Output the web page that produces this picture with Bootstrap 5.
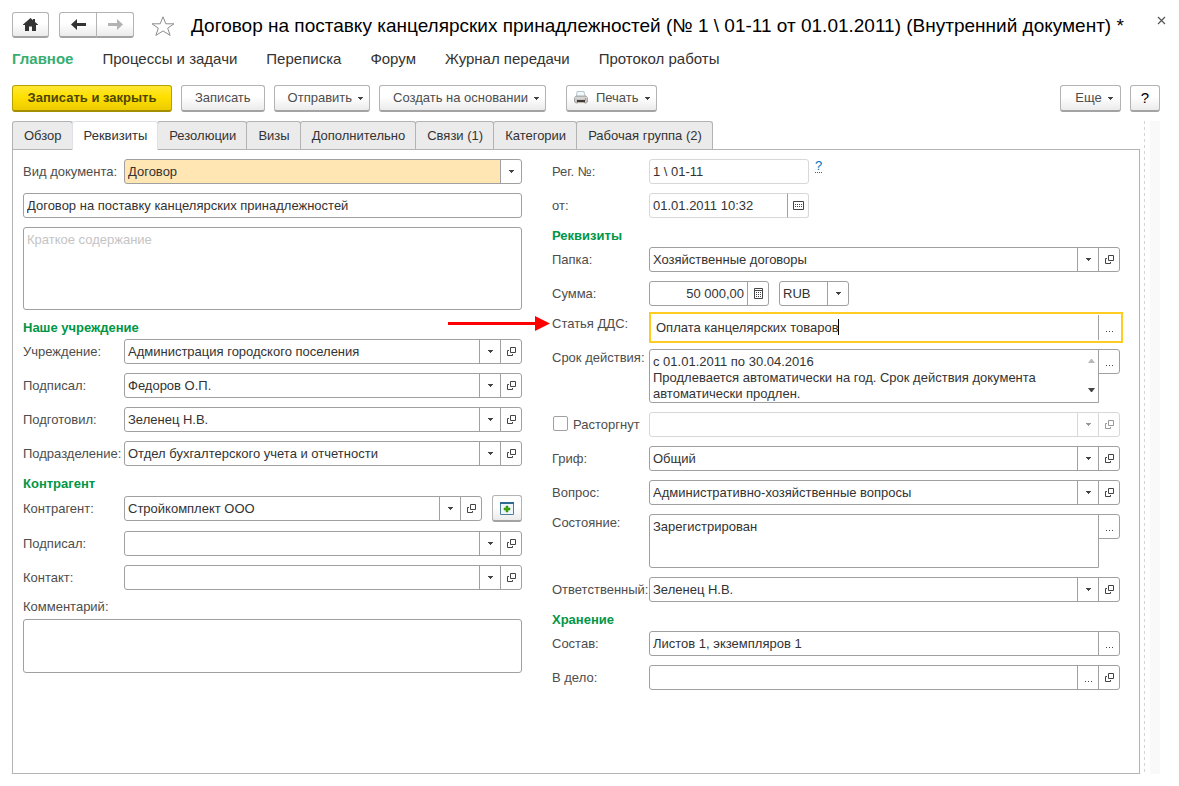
<!DOCTYPE html>
<html lang="ru">
<head>
<meta charset="utf-8">
<meta name="viewport" content="width=device-width, initial-scale=1">
<title>Договор на поставку канцелярских принадлежностей</title>
<link href="https://cdn.jsdelivr.net/npm/bootstrap@5.3.0/dist/css/bootstrap.min.css" rel="stylesheet">
<style>
  :root { --line: #a0a0a0; --line-soft: #d8d8d8; --ink: #333; --ink-soft: #4d4d4d; --green: #009646; }
  body { font-family: "Liberation Sans", Arial, sans-serif; font-size: 13px; line-height: 16px; color: var(--ink); background: #fff; }
  .page { padding: 12px 19px 12px 12px; }
  .top-bar { margin-right: -6px; }
  .history { margin: 0 17px 0 10px; }
  .doc-title { font-size: 19px; line-height: 28px; color: #000; margin: 0; font-weight: 400; }
  .btn { --bs-btn-font-size: 13px; --bs-btn-line-height: 16px; --bs-btn-padding-y: 0; --bs-btn-padding-x: 13px; --bs-btn-border-radius: 3px; --bs-btn-font-family: inherit; }
  .btn-face { --bs-btn-color: #4d4d4d; --bs-btn-border-color: #b3b3b3; --bs-btn-hover-color: #333; --bs-btn-hover-border-color: #999;
    height: 27px; background: linear-gradient(#fff 45%, #ebebeb); border-bottom: 2px solid #a3a3a3; display: inline-flex; align-items: center; justify-content: center; }
  .btn-main { --bs-btn-color: #4d4600; --bs-btn-border-color: #b8a200; --bs-btn-padding-x: 14px; min-width: 160px; background: linear-gradient(#ffe836, #ffe000 45%, #eccb00); border-bottom-color: #a38f00; font-weight: 700; }
  .btn-small { width: 37px; --bs-btn-padding-x: 0; height: 26px; }
  .history .btn-small { width: 38px; }
  .btn-drop { padding-right: 6px; }
  .btn-drop .mark-down { margin-left: 6px; }
  .btn-print { margin-left: 11px; padding-left: 7px; }
  .btn-more { min-width: 61px; }
  .sections { gap: 29px; margin-top: 8px; font-size: 15px; line-height: 22px; --bs-nav-link-padding-x: 0; --bs-nav-link-padding-y: 0; --bs-nav-link-color: #333; }
  .sections .active { color: #38ad70; font-weight: 700; }
  .tools { gap: 9px; margin-top: 15px; }
  .workarea { margin-top: 9px; }
  .nav-tabs { --bs-nav-tabs-border-width: 0; font-size: 13px; }
  .nav-tabs .nav-link { border: 1px solid #b3b3b3; border-bottom: 0; border-radius: 3px 3px 0 0; background: #ebebeb; color: #333; height: 28px; padding: 0 10px 0 11px; margin: 0 -1px 0 0; }
  .nav-tabs .nav-link.active { background: #fff; color: #333; height: 29px; margin-bottom: -1px; position: relative; }
  .sheet { border: 1px solid #b3b3b3; padding: 9px 19px 9px 10px; }
  .cols { display: grid; grid-template-columns: 499fr 568fr; gap: 30px; }
  .line { display: flex; margin-bottom: 9px; align-items: center; }
  .line > label, .line > .cap { flex: none; color: var(--ink-soft); white-space: nowrap; }
  .line.align-items-start > label { line-height: 18px; }
  .left .cap { width: 101px; } .right .cap { width: 97px; }
  .group-head { color: var(--green); font-size: 13px; line-height: 18px; font-weight: 700; margin: 0 0 2px; }
  .form-control, .form-select { font-size: 13px; line-height: 16px; min-height: 0; height: 25px; color: var(--ink); border: 1px solid var(--line); border-radius: 3px; padding: 0 3px; }
  .form-control::placeholder { color: #c4c4c4; opacity: 1; }
  textarea.form-control { padding-top: 4px; resize: none; overflow: hidden; min-height: 0; }
  .tall { height: 54px !important; } .taller { height: 83px !important; }
  .form-select { background: #fff; }
  .pick { position: relative; }
  .pick svg { position: absolute; right: 8px; top: 11px; pointer-events: none; }
  .pick .kind { background: linear-gradient(90deg, #ffe6b3, #ffe6b3) left top / calc(100% - 20px) 100% no-repeat, #fff; }
  .rule { position: absolute; right: 21px; top: 0; bottom: 0; width: 1px; background: var(--line); }
  .input-group { flex: 1 1 0; width: auto; min-width: 0; align-items: flex-start; }
  .input-group .btn { --bs-btn-border-color: var(--line); --bs-btn-padding-x: 0; --bs-btn-color: #444; background: #fff; width: 22px; height: 25px; flex: none; display: flex; align-items: center; justify-content: center; }
  .dim .form-control, .dim .btn { border-color: var(--line-soft); background: #fff; opacity: 1; }
  .dim .btn svg { opacity: .55; }
  .current { border: 2px solid #fc2; margin: -3px -3px -3px 0; padding: 1px; position: relative; height: 31px; }
  .current .form-control { border: 0; padding-left: 4px; }
  .current .btn { border-width: 0 0 0 1px; border-radius: 0; margin: 0 !important; width: 22px; }
  .caret { position: absolute; left: 188px; top: 5px; width: 1px; height: 16px; background: #000; z-index: 6; }
  .pointer { position: absolute; right: 100%; margin-right: 2px; top: 0; }
  .scroll-marks { position: absolute; right: 25px; top: 10px; z-index: 6; }
  .form-check-input { width: 15px; height: 15px; margin: 0 5px 0 1px; border: 1px solid var(--line); border-radius: 2px !important; vertical-align: -2px; float: none; }
  .hint { color: #0072bc; text-decoration: none; border-bottom: 1px dotted #0072bc; line-height: 13px; align-self: flex-start; margin-left: 6px; }
  .splitter { flex: none; width: 1px; margin: 0 5px 0 4px; background: repeating-linear-gradient(#d4d4d4 0 3px, transparent 3px 6px); }
  .gutter { flex: none; width: 10px; background: #f9f9f9; }
  .short { flex: 0 0 160px !important; width: 160px !important; }
  #reg, .soft .form-control { border-color: var(--line-soft); }
  .soft .btn { border-color: var(--line-soft); border-left-color: var(--line); }
  .sum { flex: 0 0 120px !important; margin-right: 10px; }
  .money { width: 70px; }
  .add { width: 30px; --bs-btn-padding-x: 0; margin-left: 10px; }
  .help { width: 30px; --bs-btn-padding-x: 0; font-size: 15px; }
</style>
</head>
<body>
<svg width="0" height="0" class="position-absolute" aria-hidden="true">
  <symbol id="down" viewBox="0 0 5 3"><path d="M0 0h5v1H4v1H3v1H2V2H1V1H0z" fill="#444"/></symbol>
  <symbol id="open" viewBox="0 0 9 9"><path d="M3.500 .5h5v5h-5zM2 3.500H.5v5h5V7" fill="none" stroke="#444"/></symbol>
  <symbol id="dots" viewBox="0 0 7 1"><path d="M0 0h1v1H0zM3 0h1v1H3zM6 0h1v1H6z" fill="#444"/></symbol>
</svg>

<div class="page min-vh-100 d-flex flex-column">
  <header class="top-bar d-flex align-items-start">
    <button class="btn btn-face btn-small" aria-label="Домой"><svg width="15" height="13" viewBox="0 0 15 13"><path d="M7.500 0 0 6.500V7h2v6h4V8.500h3V13h4V7h2v-.5L12 4V1h-2v1.300z" fill="#333"/></svg></button>
    <div class="btn-group history">
      <button class="btn btn-face btn-small" aria-label="Назад"><svg width="15" height="11" viewBox="0 0 15 11"><path d="M6 0v4h9v3H6v4L0 5.500z" fill="#333"/></svg></button>
      <button class="btn btn-face btn-small" aria-label="Вперед"><svg width="15" height="11" viewBox="0 0 15 11"><path d="M9 0v4H0v3h9v4l6-5.500z" fill="#b3b3b3"/></svg></button>
    </div>
    <svg class="me-3 mt-1 flex-shrink-0" width="24" height="20" viewBox="0 0 24 20"><path d="M12 .8l2.800 7h8.200l-6.300 4.400 2.400 7.200L12 14.900l-7.100 4.500 2.400-7.200L1 7.800h8.200z" fill="#fff" stroke="#8c8c8c"/></svg>
    <h1 class="doc-title flex-fill text-nowrap">Договор на поставку канцелярских принадлежностей (№ 1 \ 01-11 от 01.01.2011) (Внутренний документ) *</h1>
    <button class="btn border-0 p-0 mt-1 lh-1 d-flex" aria-label="Закрыть"><svg width="9" height="9" viewBox="0 0 9 9"><path d="M1 1l7 7m0-7l-7 7" stroke="#555" stroke-width="1.200"/></svg></button>
  </header>

  <nav class="nav sections">
    <a class="nav-link active" href="#">Главное</a>
    <a class="nav-link" href="#">Процессы и задачи</a>
    <a class="nav-link" href="#">Переписка</a>
    <a class="nav-link" href="#">Форум</a>
    <a class="nav-link" href="#">Журнал передачи</a>
    <a class="nav-link" href="#">Протокол работы</a>
  </nav>

  <div class="tools d-flex">
    <button class="btn btn-face btn-main">Записать и закрыть</button>
    <button class="btn btn-face">Записать</button>
    <button class="btn btn-face btn-drop">Отправить<svg class="mark-down" width="5" height="3"><use href="#down"/></svg></button>
    <button class="btn btn-face btn-drop">Создать на основании<svg class="mark-down" width="5" height="3"><use href="#down"/></svg></button>
    <button class="btn btn-face btn-drop btn-print"><svg class="me-2" width="14" height="14" viewBox="0 0 14 14"><path d="M3 .5h7l1 5H2.500z" fill="#f2f7fa" stroke="#b9c7cf"/><path d="M2 5h10l1.500 2v4l-1.500 1H2L.5 11V7z" fill="#c4c4c2" stroke="#9a9a9a" stroke-width=".8"/><path d="M1 7h12" stroke="#e6e6e6"/><path d="M3 9h8v2.500H3z" fill="#443a35"/><path d="M3.500 11.500h7v2h-7z" fill="#f4efe9"/><circle cx="11.500" cy="8" r=".8" fill="#d66"/></svg>Печать<svg class="mark-down" width="5" height="3"><use href="#down"/></svg></button>
    <button class="btn btn-face btn-drop btn-more ms-auto">Еще<svg class="mark-down" width="5" height="3"><use href="#down"/></svg></button>
    <button class="btn btn-face help text-black">?</button>
  </div>

  <div class="workarea d-flex flex-fill">
    <main class="flex-fill d-flex flex-column">
      <div class="nav nav-tabs" role="tablist">
        <button class="nav-link" role="tab">Обзор</button>
        <button class="nav-link active" role="tab">Реквизиты</button>
        <button class="nav-link" role="tab">Резолюции</button>
        <button class="nav-link" role="tab">Визы</button>
        <button class="nav-link" role="tab">Дополнительно</button>
        <button class="nav-link" role="tab">Связи (1)</button>
        <button class="nav-link" role="tab">Категории</button>
        <button class="nav-link" role="tab">Рабочая группа (2)</button>
      </div>
      <form class="sheet flex-fill">
        <div class="cols">
          <div class="left">
            <div class="line"><label class="cap" for="kind">Вид документа:</label>
              <div class="pick flex-fill"><select id="kind" class="form-select kind"><option>Договор</option></select><span class="rule"></span><svg width="5" height="3"><use href="#down"/></svg></div></div>
            <div class="line"><input class="form-control" aria-label="Наименование" value="Договор на поставку канцелярских принадлежностей"></div>
            <div class="line"><textarea class="form-control taller" aria-label="Краткое содержание" placeholder="Краткое содержание"></textarea></div>
            <h2 class="group-head">Наше учреждение</h2>
            <div class="line"><label class="cap" for="org">Учреждение:</label><div class="input-group"><input id="org" class="form-control" value="Администрация городского поселения"><button type="button" class="btn" aria-label="Выбрать"><svg width="5" height="3"><use href="#down"/></svg></button><button type="button" class="btn" aria-label="Открыть"><svg width="9" height="9"><use href="#open"/></svg></button></div></div>
            <div class="line"><label class="cap" for="signer">Подписал:</label><div class="input-group"><input id="signer" class="form-control" value="Федоров О.П."><button type="button" class="btn" aria-label="Выбрать"><svg width="5" height="3"><use href="#down"/></svg></button><button type="button" class="btn" aria-label="Открыть"><svg width="9" height="9"><use href="#open"/></svg></button></div></div>
            <div class="line"><label class="cap" for="author">Подготовил:</label><div class="input-group"><input id="author" class="form-control" value="Зеленец Н.В."><button type="button" class="btn" aria-label="Выбрать"><svg width="5" height="3"><use href="#down"/></svg></button><button type="button" class="btn" aria-label="Открыть"><svg width="9" height="9"><use href="#open"/></svg></button></div></div>
            <div class="line"><label class="cap" for="unit">Подразделение:</label><div class="input-group"><input id="unit" class="form-control" value="Отдел бухгалтерского учета и отчетности"><button type="button" class="btn" aria-label="Выбрать"><svg width="5" height="3"><use href="#down"/></svg></button><button type="button" class="btn" aria-label="Открыть"><svg width="9" height="9"><use href="#open"/></svg></button></div></div>
            <h2 class="group-head">Контрагент</h2>
            <div class="line"><label class="cap" for="party">Контрагент:</label><div class="input-group"><input id="party" class="form-control" value="Стройкомплект ООО"><button type="button" class="btn" aria-label="Выбрать"><svg width="5" height="3"><use href="#down"/></svg></button><button type="button" class="btn" aria-label="Открыть"><svg width="9" height="9"><use href="#open"/></svg></button></div>
              <button type="button" class="btn btn-face add" aria-label="Создать"><svg width="14" height="13" viewBox="0 0 14 13"><path d="M.5.5h13v12H.5z" fill="#eef6fb" stroke="#4f7d9c"/><path d="M0 0h14v2H0z" fill="#2f6a94"/><path d="M6 4h2v2h2v2H8v2H6V8H4V6h2z" fill="#3ca60c" stroke="#2f8a08" stroke-width=".5"/></svg></button></div>
            <div class="line"><label class="cap" for="psigner">Подписал:</label><div class="input-group"><input id="psigner" class="form-control"><button type="button" class="btn" aria-label="Выбрать"><svg width="5" height="3"><use href="#down"/></svg></button><button type="button" class="btn" aria-label="Открыть"><svg width="9" height="9"><use href="#open"/></svg></button></div></div>
            <div class="line"><label class="cap" for="contact">Контакт:</label><div class="input-group"><input id="contact" class="form-control"><button type="button" class="btn" aria-label="Выбрать"><svg width="5" height="3"><use href="#down"/></svg></button><button type="button" class="btn" aria-label="Открыть"><svg width="9" height="9"><use href="#open"/></svg></button></div></div>
            <div class="line mb-1"><label for="note">Комментарий:</label></div>
            <textarea id="note" class="form-control tall"></textarea>
          </div>

          <div class="right">
            <div class="line"><label class="cap" for="reg">Рег. №:</label><input id="reg" class="form-control short" value="1 \ 01-11"><a class="hint" href="#">?</a></div>
            <div class="line"><label class="cap" for="date">от:</label><div class="input-group short soft"><input id="date" class="form-control" value="01.01.2011 10:32"><button type="button" class="btn" aria-label="Календарь"><svg width="11" height="9" viewBox="0 0 11 9"><path d="M.5.5h10v8H.5z" fill="none" stroke="#444"/><path d="M2 3.500h7M2 5.500h7" stroke="#444" stroke-dasharray="1 1"/></svg></button></div></div>
            <h2 class="group-head">Реквизиты</h2>
            <div class="line"><label class="cap" for="folder">Папка:</label><div class="input-group"><input id="folder" class="form-control" value="Хозяйственные договоры"><button type="button" class="btn" aria-label="Выбрать"><svg width="5" height="3"><use href="#down"/></svg></button><button type="button" class="btn" aria-label="Открыть"><svg width="9" height="9"><use href="#open"/></svg></button></div></div>
            <div class="line"><label class="cap" for="sum">Сумма:</label><div class="input-group sum"><input id="sum" class="form-control text-end" value="50 000,00"><button type="button" class="btn" aria-label="Калькулятор"><svg width="9" height="11" viewBox="0 0 9 11"><path d="M.5.5h8v10h-8zM0 2.500h9" fill="none" stroke="#444"/><path d="M2 4.500h5M2 6.500h5M2 8.500h5" stroke="#444" stroke-dasharray="1 1"/></svg></button></div>
              <div class="pick money"><select class="form-select" aria-label="Валюта"><option>RUB</option></select><span class="rule"></span><svg width="5" height="3"><use href="#down"/></svg></div></div>
            <div class="line position-relative align-items-start"><svg class="pointer" width="102" height="16" viewBox="0 0 102 16"><path d="M0 7h87V1l15 7.500L87 16v-6H0z" fill="#f00"/></svg><label class="cap" for="item">Статья ДДС:</label><div class="input-group current"><input id="item" class="form-control" value="Оплата канцелярских товаров"><span class="caret"></span><button type="button" class="btn" aria-label="Выбрать"><svg class="mt-2" width="7" height="1"><use href="#dots"/></svg></button></div></div>
            <div class="line align-items-start"><label class="cap" for="term">Срок действия:</label><div class="input-group position-relative"><textarea id="term" class="form-control tall">с 01.01.2011 по 30.04.2016
Продлевается автоматически на год. Срок действия документа автоматически продлен.</textarea><svg class="scroll-marks" width="7" height="34" viewBox="0 0 7 34"><path d="M3 0h1l3 4H0z" fill="#b8b8b8"/><path d="M0 29h7l-3 4H3z" fill="#444"/></svg><button type="button" class="btn" aria-label="Выбрать"><svg class="mt-2" width="7" height="1"><use href="#dots"/></svg></button></div></div>
            <div class="line"><div class="cap"><input class="form-check-input" type="checkbox" id="ended"><label for="ended">Расторгнут</label></div><div class="input-group dim"><input class="form-control" aria-label="Причина" disabled><button type="button" class="btn" aria-label="Выбрать" disabled><svg width="5" height="3"><use href="#down"/></svg></button><button type="button" class="btn" aria-label="Открыть" disabled><svg width="9" height="9"><use href="#open"/></svg></button></div></div>
            <div class="line"><label class="cap" for="grif">Гриф:</label><div class="input-group"><input id="grif" class="form-control" value="Общий"><button type="button" class="btn" aria-label="Выбрать"><svg width="5" height="3"><use href="#down"/></svg></button><button type="button" class="btn" aria-label="Открыть"><svg width="9" height="9"><use href="#open"/></svg></button></div></div>
            <div class="line"><label class="cap" for="topic">Вопрос:</label><div class="input-group"><input id="topic" class="form-control" value="Административно-хозяйственные вопросы"><button type="button" class="btn" aria-label="Выбрать"><svg width="5" height="3"><use href="#down"/></svg></button><button type="button" class="btn" aria-label="Открыть"><svg width="9" height="9"><use href="#open"/></svg></button></div></div>
            <div class="line align-items-start"><label class="cap" for="state">Состояние:</label><div class="input-group"><textarea id="state" class="form-control tall">Зарегистрирован</textarea><button type="button" class="btn" aria-label="Выбрать"><svg class="mt-2" width="7" height="1"><use href="#dots"/></svg></button></div></div>
            <div class="line"><label class="cap" for="resp">Ответственный:</label><div class="input-group"><input id="resp" class="form-control" value="Зеленец Н.В."><button type="button" class="btn" aria-label="Выбрать"><svg width="5" height="3"><use href="#down"/></svg></button><button type="button" class="btn" aria-label="Открыть"><svg width="9" height="9"><use href="#open"/></svg></button></div></div>
            <h2 class="group-head">Хранение</h2>
            <div class="line"><label class="cap" for="pages">Состав:</label><div class="input-group"><input id="pages" class="form-control" value="Листов 1, экземпляров 1"><button type="button" class="btn" aria-label="Выбрать"><svg class="mt-2" width="7" height="1"><use href="#dots"/></svg></button></div></div>
            <div class="line"><label class="cap" for="file">В дело:</label><div class="input-group"><input id="file" class="form-control"><button type="button" class="btn" aria-label="Выбрать"><svg class="mt-2" width="7" height="1"><use href="#dots"/></svg></button><button type="button" class="btn" aria-label="Открыть"><svg width="9" height="9"><use href="#open"/></svg></button></div></div>
          </div>
        </div>
      </form>
    </main>
    <div class="splitter"></div>
    <div class="gutter"></div>
  </div>
</div>
<script src="https://cdn.jsdelivr.net/npm/bootstrap@5.3.0/dist/js/bootstrap.bundle.min.js"></script>
</body>
</html>
